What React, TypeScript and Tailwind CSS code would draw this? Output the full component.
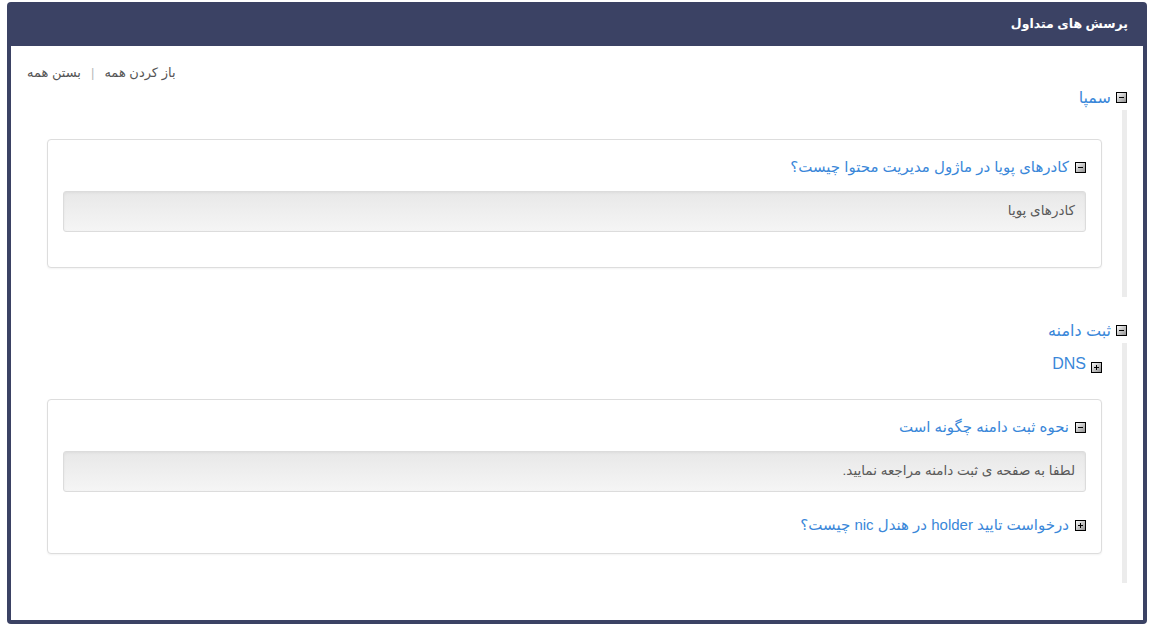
import React from "react";

function Toggle({ plus = false }: { plus?: boolean }) {
  return (
    <svg width="11" height="11" viewBox="0 0 11 11" className="shrink-0">
      <defs>
        <linearGradient id="tg" x1="0" y1="0" x2="1" y2="1">
          <stop offset="0" stopColor="#ffffff" />
          <stop offset="1" stopColor="#8c8c8c" />
        </linearGradient>
      </defs>
      <rect x="0.5" y="0.5" width="10" height="10" fill="url(#tg)" stroke="#000" />
      <rect x="3" y="5" width="5" height="1" fill="#000" />
      {plus && <rect x="5" y="3" width="1" height="5" fill="#000" />}
    </svg>
  );
}

function Question({ q, a, open }: { q: string; a?: string; open: boolean }) {
  return (
    <div>
      <div className="flex h-[26px] items-center gap-[6px]">
        <Toggle plus={!open} />
        <span className="text-[15px] text-[#3a87d9]">{q}</span>
      </div>
      {open && a && (
        <div className="mt-[11px] mb-[20px] h-[41px] flex items-center rounded-[3px] border border-[#dcdcdc] bg-linear-to-b from-[#e8e8e8] to-[#f5f5f5] px-[10px] text-[13.5px] text-[#5a5a5a] shadow-[inset_0_1px_3px_rgba(0,0,0,0.05)]">
          {a}
        </div>
      )}
    </div>
  );
}

function Card({ children }: { children: React.ReactNode }) {
  return (
    <div className="rounded-[4px] border border-[#dddddd] bg-white px-[15px] pt-[14px] pb-[15px] shadow-[0_1px_2px_rgba(0,0,0,0.05)]">
      {children}
    </div>
  );
}

function CategoryHeading({ title }: { title: string }) {
  return (
    <div className="flex h-[25px] items-center gap-[5px]">
      <Toggle />
      <span className="text-[16px] text-[#3a87d9]">{title}</span>
    </div>
  );
}

export default function App() {
  return (
    <div
      dir="rtl"
      className="bg-white px-[7px] pt-[2px] pb-[6px] font-[family-name:'Liberation_Sans','DejaVu_Sans',sans-serif]"
    >
      <div className="rounded-[4px] bg-[#3b4264] px-[4px] pb-[4px]">
        <div className="flex h-[44px] items-center pr-[15px]">
          <h1 className="text-[12.5px] font-bold text-white">پرسش های متداول</h1>
        </div>
        <div className="bg-white px-[16px] pt-[15px] pb-[16px]">
          <div className="flex h-[24px] items-center justify-end gap-[10px] text-[13px] text-[#555]">
            <span>باز کردن همه</span>
            <span className="text-[#bbb]">|</span>
            <span>بستن همه</span>
          </div>

          <div className="mb-[21px]">
            <CategoryHeading title="سمپا" />
            <div className="border-r-[5px] border-[#ececec] px-[20px] pt-[29px] pb-[29px]">
              <Card>
                <Question open q="کادرهای پویا در ماژول مدیریت محتوا چیست؟" a="کادرهای پویا" />
              </Card>
            </div>
          </div>

          <div className="mb-[21px]">
            <CategoryHeading title="ثبت دامنه" />
            <div className="border-r-[5px] border-[#ececec] px-[20px] pt-[10px] pb-[29px]">
              <div className="flex h-[24px] items-end gap-[5px] pb-[4px]">
                <Toggle plus />
                <span className="text-[16px] leading-[18px] text-[#3a87d9]">DNS</span>
              </div>
              <div className="mt-[22px]">
                <Card>
                  <Question open q="نحوه ثبت دامنه چگونه است" a="لطفا به صفحه ی ثبت دامنه مراجعه نمایید." />
                  <Question open={false} q="درخواست تایید holder در هندل nic چیست؟" />
                </Card>
              </div>
            </div>
          </div>
        </div>
      </div>
    </div>
  );
}
